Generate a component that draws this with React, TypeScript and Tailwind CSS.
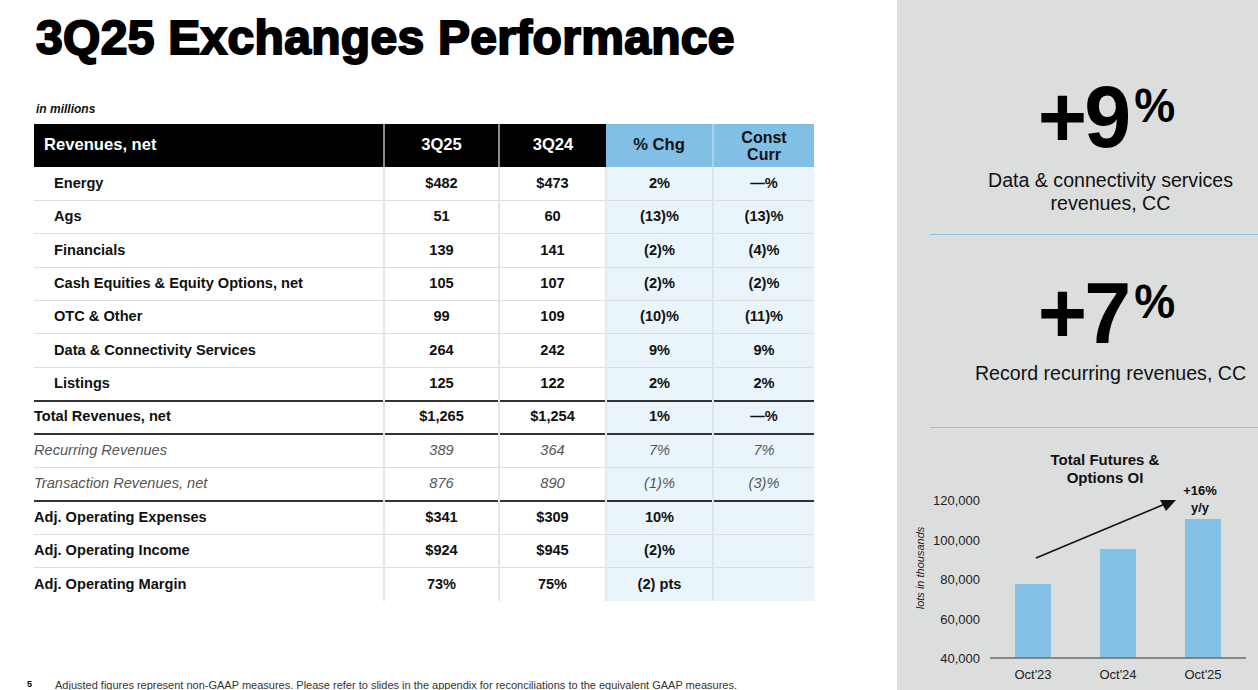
const font = "font-['Liberation_Sans',Arial,sans-serif]";

type Row = {
  label: string;
  q25: string;
  q24: string;
  chg: string;
  cc: string;
  kind: "sub" | "total" | "italic" | "adj";
  topRule?: boolean;
};

const rows: Row[] = [
  { label: "Energy", q25: "$482", q24: "$473", chg: "2%", cc: "—%", kind: "sub" },
  { label: "Ags", q25: "51", q24: "60", chg: "(13)%", cc: "(13)%", kind: "sub" },
  { label: "Financials", q25: "139", q24: "141", chg: "(2)%", cc: "(4)%", kind: "sub" },
  { label: "Cash Equities & Equity Options, net", q25: "105", q24: "107", chg: "(2)%", cc: "(2)%", kind: "sub" },
  { label: "OTC & Other", q25: "99", q24: "109", chg: "(10)%", cc: "(11)%", kind: "sub" },
  { label: "Data & Connectivity Services", q25: "264", q24: "242", chg: "9%", cc: "9%", kind: "sub" },
  { label: "Listings", q25: "125", q24: "122", chg: "2%", cc: "2%", kind: "sub" },
  { label: "Total Revenues, net", q25: "$1,265", q24: "$1,254", chg: "1%", cc: "—%", kind: "total", topRule: true },
  { label: "Recurring Revenues", q25: "389", q24: "364", chg: "7%", cc: "7%", kind: "italic", topRule: true },
  { label: "Transaction Revenues, net", q25: "876", q24: "890", chg: "(1)%", cc: "(3)%", kind: "italic" },
  { label: "Adj. Operating Expenses", q25: "$341", q24: "$309", chg: "10%", cc: "", kind: "adj", topRule: true },
  { label: "Adj. Operating Income", q25: "$924", q24: "$945", chg: "(2)%", cc: "", kind: "adj" },
  { label: "Adj. Operating Margin", q25: "73%", q24: "75%", chg: "(2) pts", cc: "", kind: "adj" },
];

function RevenueTable() {
  return (
    <table className="w-[780px] border-collapse table-fixed text-[14.6px]">
      <colgroup>
        <col className="w-[350px]" />
        <col className="w-[115px]" />
        <col className="w-[107px]" />
        <col className="w-[107px]" />
        <col className="w-[101px]" />
      </colgroup>
      <thead>
        <tr className="h-[43px] text-[16.6px] font-bold">
          <th className="bg-black text-white text-left pl-[10px] border-r-2 border-[#8a8a8a]">Revenues, net</th>
          <th className="bg-black text-white border-r-2 border-[#8a8a8a]">3Q25</th>
          <th className="bg-black text-white">3Q24</th>
          <th className="bg-[#81c0e4] text-[#111] border-r-2 border-[#a8d3ec]">% Chg</th>
          <th className="bg-[#81c0e4] text-[#111] text-[16px] leading-[17px]">
            Const
            <br />
            Curr
          </th>
        </tr>
      </thead>
      <tbody>
        {rows.map((r, i) => {
          const rule = r.topRule ? "border-t-2 border-t-[#333]" : i === 0 ? "" : "border-t border-t-[#dedede]";
          const text =
            r.kind === "italic" ? "italic font-normal text-[#555]" : "font-bold text-[#111]";
          return (
            <tr key={r.label} className={`h-[33.4px] ${text}`}>
              <td className={`${rule} ${r.kind === "sub" ? "pl-[20px]" : "pl-0"} border-r-2 border-r-[#e6e6e6]`}>
                {r.label}
              </td>
              <td className={`${rule} text-center border-r-2 border-r-[#e6e6e6]`}>{r.q25}</td>
              <td className={`${rule} text-center border-r-2 border-r-[#e6e6e6]`}>{r.q24}</td>
              <td className={`${rule} text-center bg-[#eaf5fb] border-r-2 border-r-[#dde6ec]`}>{r.chg}</td>
              <td className={`${rule} text-center bg-[#eaf5fb]`}>{r.cc}</td>
            </tr>
          );
        })}
      </tbody>
    </table>
  );
}

function BigStat({ value, note, noteClass }: { value: string; note: React.ReactNode; noteClass: string }) {
  return (
    <div className="flex flex-col items-center pl-[66px]">
      <div className="flex items-start text-black font-bold scale-x-[0.96] origin-center mr-[8px]">
        <span className="text-[88px] leading-none tracking-[-3px]">{value}</span>
        <span className="text-[48px] leading-none mt-[9px] ml-[6px]">%</span>
      </div>
      <div className={`text-[19.6px] leading-[23px] text-center text-[#111] ${noteClass}`}>{note}</div>
    </div>
  );
}

function FuturesChart() {
  const bars = [
    { label: "Oct'23", x: 118, top: 156 },
    { label: "Oct'24", x: 203, top: 121 },
    { label: "Oct'25", x: 288, top: 91 },
  ];
  const ticks = [
    { v: "120,000", y: 72 },
    { v: "100,000", y: 112 },
    { v: "80,000", y: 151 },
    { v: "60,000", y: 191 },
    { v: "40,000", y: 230 },
  ];
  return (
    <svg width="361" height="260" viewBox="0 0 361 260" className="block">
      <text x="208" y="37" textAnchor="middle" fontSize="15" fontWeight="700" fill="#111">
        Total Futures &amp;
      </text>
      <text x="208" y="55" textAnchor="middle" fontSize="15" fontWeight="700" fill="#111">
        Options OI
      </text>
      {ticks.map((t) => (
        <text key={t.v} x="83" y={t.y + 5} textAnchor="end" fontSize="13" fill="#222">
          {t.v}
        </text>
      ))}
      <text
        transform="translate(27 140) rotate(-90)"
        textAnchor="middle"
        fontSize="11"
        fontStyle="italic"
        fill="#222"
      >
        lots in thousands
      </text>
      {bars.map((b) => (
        <g key={b.label}>
          <rect x={b.x} y={b.top} width="36" height={230 - b.top} fill="#84c1e6" />
          <text x={b.x + 18} y="251" textAnchor="middle" fontSize="13" fill="#222">
            {b.label}
          </text>
        </g>
      ))}
      <line x1="93" y1="230" x2="349" y2="230" stroke="#6b6b6b" strokeWidth="1.5" />
      <line x1="139" y1="130" x2="268" y2="76" stroke="#111" strokeWidth="1.6" />
      <polygon points="279,72 263,72 269,83" fill="#111" />
      <text x="303" y="67" textAnchor="middle" fontSize="13" fontWeight="700" fill="#111">
        +16%
      </text>
      <text x="303" y="84" textAnchor="middle" fontSize="13" fontWeight="700" fill="#111">
        y/y
      </text>
    </svg>
  );
}

export default function App() {
  return (
    <div className={`w-[1258px] h-[690px] flex overflow-hidden bg-white ${font}`}>
      <div className="w-[897px] flex flex-col">
        <h1 className="pt-[14px] pl-[36px] text-[48px] leading-[48px] font-black tracking-[0.3px] text-black [-webkit-text-stroke:2px_black]">
          3Q25 Exchanges Performance
        </h1>
        <div className="mt-[39px] pl-[36px] text-[12px] leading-[16px] font-bold italic text-[#111]">in millions</div>
        <div className="mt-[7px] pl-[34px]">
          <RevenueTable />
        </div>
        <div className="mt-[77px] flex items-center h-[14px]">
          <span className="pl-[27px] w-[55px] text-[9px] font-black text-black">5</span>
          <span className="text-[11px] text-[#333]">
            Adjusted figures represent non-GAAP measures. Please refer to slides in the appendix for reconciliations to the equivalent GAAP measures.
          </span>
        </div>
      </div>
      <div className="w-[361px] bg-[#dcdddd] flex flex-col">
        <div className="mt-[73px]">
          <BigStat
            value="+9"
            noteClass="mt-[8px]"
            note={
              <>
                Data &amp; connectivity services
                <br />
                revenues, CC
              </>
            }
          />
        </div>
        <div className="mt-[19px] ml-[33px] h-px bg-[#8fc3e2]" />
        <div className="mt-[34px]">
          <BigStat value="+7" noteClass="mt-[5px]" note="Record recurring revenues, CC" />
        </div>
        <div className="mt-[42px] ml-[33px] h-px bg-[#8fc3e2]" />
        <FuturesChart />
      </div>
    </div>
  );
}
